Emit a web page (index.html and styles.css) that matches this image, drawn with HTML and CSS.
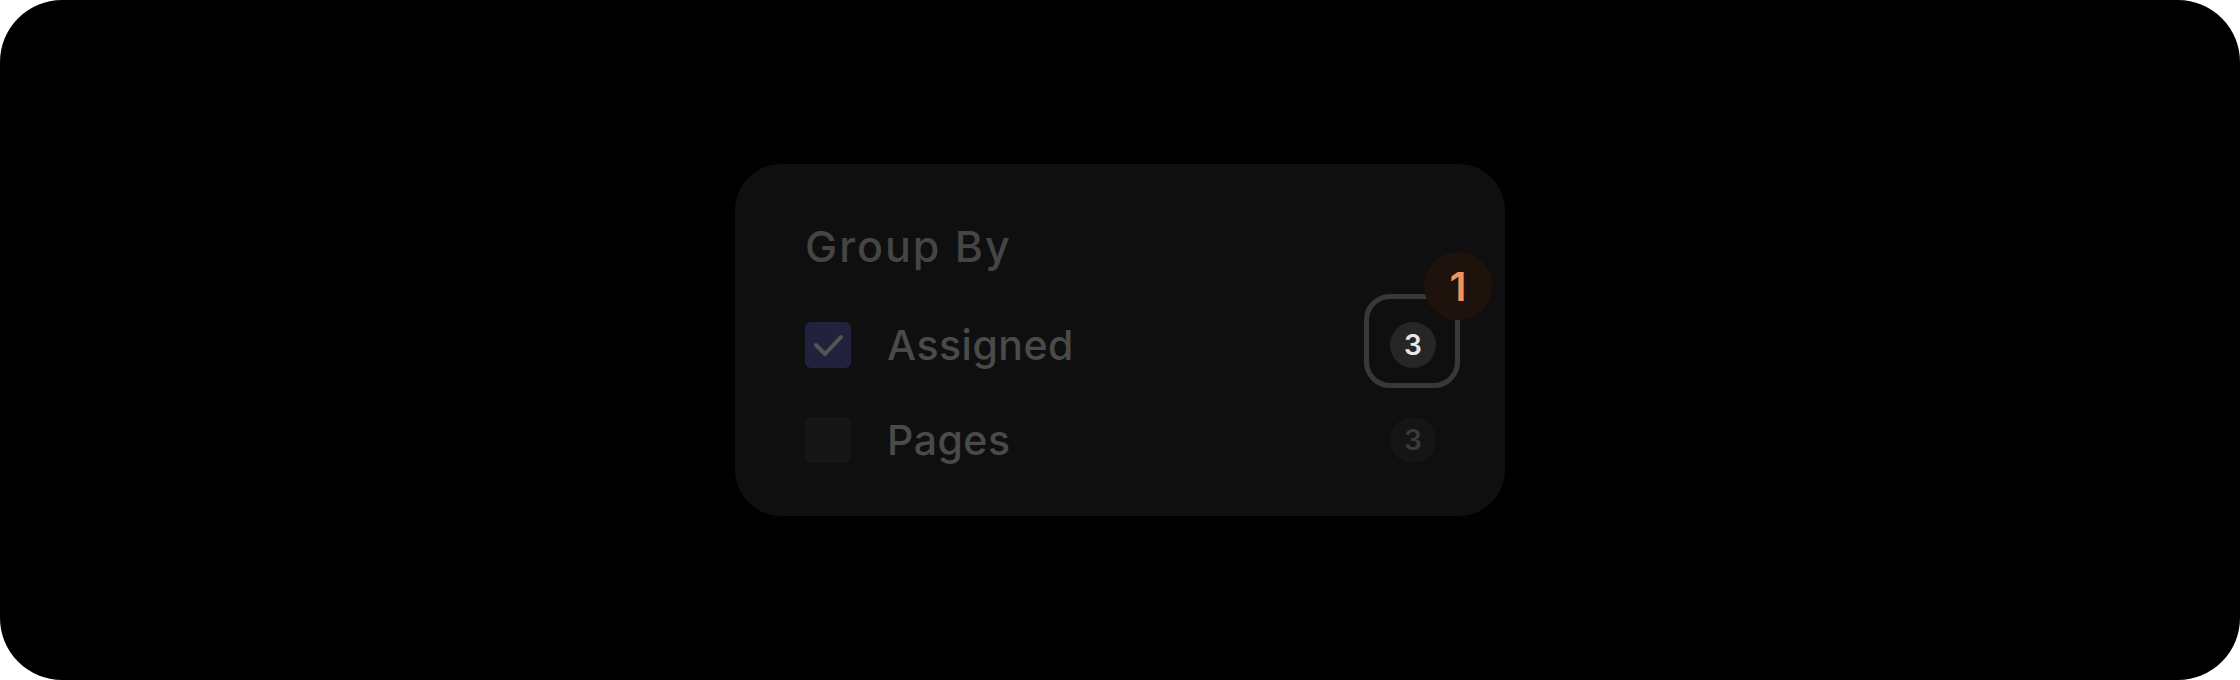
FILE: index.html
```html
<!DOCTYPE html>
<html lang="en">
<head>
    <meta charset="UTF-8">
    <meta name="viewport" content="width=device-width, initial-scale=1.0">
    <title>Group By</title>
    <link rel="stylesheet" href="styles.css">
</head>
<body>
    <div class="frame">
        <div class="card">
            <div class="title">Group By</div>

            <div class="row">
                <span class="box checked">
                    <svg width="46" height="46" viewBox="0 0 46 46">
                        <path d="M11 23 L20 32 L36 15" fill="none" stroke="#555555" stroke-width="4" stroke-linecap="round" stroke-linejoin="round"/>
                    </svg>
                </span>
                <span class="label">Assigned</span>
                <span class="count">
                    3
                    <span class="ring"></span>
                    <span class="badge">1</span>
                </span>
            </div>

            <div class="row">
                <span class="box"></span>
                <span class="label">Pages</span>
                <span class="count dim">3</span>
            </div>
        </div>
    </div>
</body>
</html>
```

FILE: styles.css
```css
body {
    margin: 0;
    background-color: #ffffff;
    font-family: "Inter", "Liberation Sans", sans-serif;
}

.frame {
    width: 2240px;
    height: 680px;
    background-color: #000000;
    border-radius: 62px;
    display: flex;
    justify-content: center;
    align-items: center;
}

.card {
    width: 770px;
    height: 352px;
    box-sizing: border-box;
    padding: 61px 69px 0 70px;
    background-color: #0f0f0f;
    border-radius: 46px;
    display: flex;
    flex-direction: column;
}

.title {
    font-size: 43px;
    font-weight: 500;
    letter-spacing: 2px;
    line-height: 1;
    color: #454545;
    margin-bottom: 54px;
}

.row {
    display: flex;
    align-items: center;
    height: 46px;
    margin-bottom: 49px;
}

.box {
    width: 46px;
    height: 46px;
    border-radius: 6px;
    background-color: #161616;
    flex-shrink: 0;
}

.box.checked {
    background-color: #22213e;
}

.box svg {
    display: block;
}

.label {
    margin-left: 36px;
    font-size: 41px;
    font-weight: 500;
    letter-spacing: 0.5px;
    line-height: 1;
    color: #4a4a4a;
}

.count {
    position: relative;
    margin-left: auto;
    width: 46px;
    height: 46px;
    border-radius: 50%;
    background-color: #262626;
    color: #e8e8e8;
    font-size: 28px;
    font-weight: 600;
    display: flex;
    justify-content: center;
    align-items: center;
}

.count.dim {
    background-color: #151515;
    color: #3a3a3a;
}

.ring {
    position: absolute;
    top: -28px;
    left: -26px;
    width: 96px;
    height: 94px;
    box-sizing: border-box;
    border: 5px solid #383838;
    border-radius: 26px;
}

.badge {
    position: absolute;
    top: -70px;
    left: 34px;
    width: 68px;
    height: 68px;
    border-radius: 50%;
    background-color: #1e120c;
    color: #f2935c;
    font-size: 40px;
    font-weight: 600;
    display: flex;
    justify-content: center;
    align-items: center;
}
```
